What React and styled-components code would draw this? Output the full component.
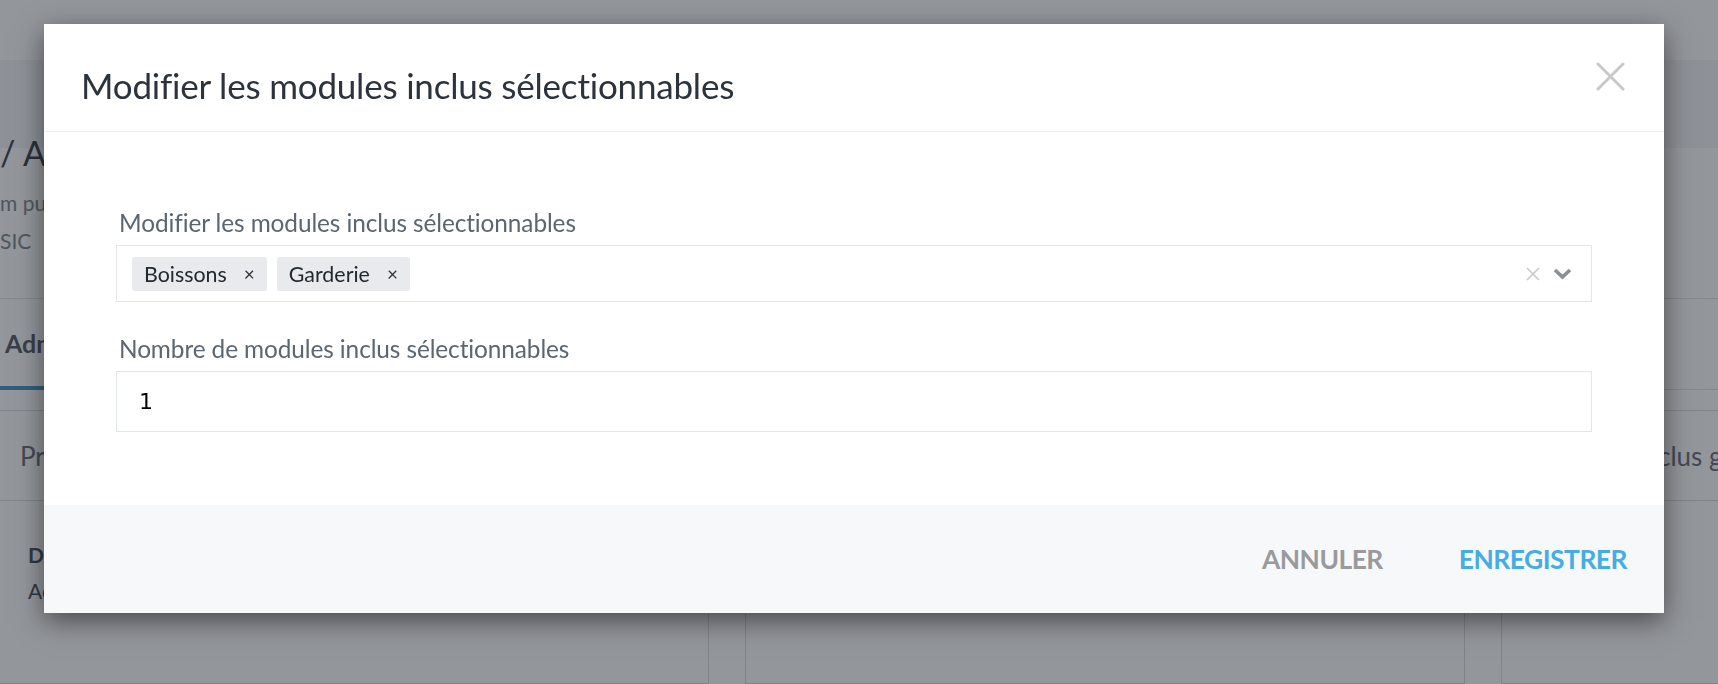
import React from "react";
import styled, { createGlobalStyle } from "styled-components";

const Global = createGlobalStyle`
  html, body { margin: 0; padding: 0; }
  body {
    width: 1718px;
    height: 684px;
    overflow: hidden;
    background: #ffffff;
    font-family: "Lato", "Liberation Sans", sans-serif;
  }
`;

/* ---------- background page ---------- */
const Page = styled.div`
  width: 1718px;
  height: 684px;
  overflow: hidden;
  display: flex;
  flex-direction: column;
  background: #ffffff;
  color: #2f3640;
`;

const TopNav = styled.div`
  height: 60px;
  flex: none;
  background: #ffffff;
  box-shadow: 0 2px 6px rgba(0, 0, 0, 0.1);
`;

const HeaderBand = styled.div`
  height: 88px;
  flex: none;
  background: #f4f5f7;
`;

const TitleSection = styled.div`
  height: 150px;
  flex: none;
  border-bottom: 1px solid #dfe3e6;
  display: flex;
  flex-direction: column;
`;

const PageTitle = styled.div`
  font-size: 34px;
  font-weight: 400;
  line-height: 34px;
  margin-top: -12px;
  white-space: nowrap;
  color: #2f3640;
`;

const PageSub = styled.div`
  font-size: 21px;
  line-height: 38px;
  color: #75808a;
  white-space: nowrap;
  margin-top: ${(p) => p.$top || 0}px;
`;

const Tabs = styled.div`
  height: 90px;
  flex: none;
  border-bottom: 1px solid #dfe3e6;
  display: flex;
  align-items: stretch;
`;

const Tab = styled.div`
  padding: 0 20px 0 5px;
  display: flex;
  align-items: center;
  font-size: 25px;
  font-weight: 700;
  color: #4a525b;
  border-bottom: 4px solid #3b8fc0;
  margin-bottom: -1px;
`;

const Cards = styled.div`
  margin-top: 20px;
  display: grid;
  grid-template-columns: 709px 720px 260px;
  column-gap: 36px;
  flex: 1;
`;

const Card = styled.div`
  border: 1px solid #d7dbdf;
  border-left-width: ${(p) => (p.$first ? 0 : 1)}px;
  display: flex;
  flex-direction: column;
`;

const CardHead = styled.div`
  height: 89px;
  border-bottom: 1px solid #d7dbdf;
  display: flex;
  align-items: center;
  padding-left: ${(p) => p.$pad || 20}px;
  font-size: 26px;
  color: #5b6670;
  white-space: nowrap;
`;

const CardBody = styled.div`
  padding: 36px 28px 0;
  font-size: 21px;
  line-height: 36px;
  color: #3b434b;
`;

const CardLabel = styled.div`
  font-weight: 700;
`;

/* ---------- overlay & modal ---------- */
const Overlay = styled.div`
  position: fixed;
  inset: 0;
  background: rgba(40, 46, 56, 0.5);
`;

const Modal = styled.div`
  position: fixed;
  left: 44px;
  top: 24px;
  width: 1620px;
  background: #ffffff;
  box-shadow: 0 8px 26px rgba(0, 0, 0, 0.5);
  display: flex;
  flex-direction: column;
`;

const ModalHeader = styled.div`
  height: 108px;
  box-sizing: border-box;
  border-bottom: 1px solid #eceeef;
  padding: 38px 39px 0 37px;
  display: flex;
  justify-content: space-between;
  align-items: flex-start;
`;

const ModalTitle = styled.h1`
  margin: 6px 0 0;
  font-size: 35px;
  font-weight: 400;
  line-height: 1;
  color: #2c333c;
  letter-spacing: -0.2px;
`;

const CloseButton = styled.button`
  width: 29px;
  height: 29px;
  padding: 0;
  border: 0;
  background: none;
  display: block;
  cursor: pointer;
`;

const ModalBody = styled.div`
  padding: 77px 72px 73px 72px;
  display: flex;
  flex-direction: column;
`;

const Field = styled.div`
  display: flex;
  flex-direction: column;
  margin-top: ${(p) => p.$top || 0}px;
`;

const Label = styled.label`
  font-size: 24.4px;
  line-height: 28px;
  color: #5b6670;
  padding-left: 3px;
  margin-bottom: 8px;
  letter-spacing: -0.1px;
  white-space: nowrap;
`;

const SelectBox = styled.div`
  height: 57px;
  box-sizing: border-box;
  border: 1px solid #e4e7e9;
  display: flex;
  align-items: center;
  padding: 0 19px 0 15px;
`;

const TagList = styled.div`
  flex: 1;
  display: flex;
  gap: 10px;
`;

const Tag = styled.span`
  height: 34px;
  display: inline-flex;
  align-items: center;
  background: #e8eaed;
  border-radius: 3px;
  padding: 0 12px 0 12px;
  font-size: 21.4px;
  color: #222831;
`;

const TagRemove = styled.span`
  margin-left: 17px;
  font-size: 19px;
  color: #30363d;
  line-height: 1;
`;

const SelectIcons = styled.div`
  display: flex;
  align-items: center;
  gap: 13px;
`;

const NumberInput = styled.input`
  height: 61px;
  box-sizing: border-box;
  border: 1px solid #e1e6e9;
  padding: 0 22px;
  font-family: "DejaVu Sans", sans-serif;
  font-size: 22px;
  color: #000;
  outline: none;
  background: #fff;
`;

const ModalFooter = styled.div`
  height: 108px;
  background: #f7f8fa;
  display: flex;
  align-items: center;
  justify-content: flex-end;
  padding-right: 21px;
  gap: 44px;
`;

const FooterButton = styled.button`
  border: 0;
  background: none;
  padding: 8px 16px;
  font-family: "Lato", "Liberation Sans", sans-serif;
  font-size: 26.4px;
  font-weight: 700;
  letter-spacing: -0.5px;
  color: ${(p) => (p.$primary ? "#45ade2" : "#9a9a9c")};
  cursor: pointer;
`;

const CloseIcon = () => (
  <svg width="29" height="29" viewBox="0 0 29 29">
    <path d="M2 2 L27 27 M27 2 L2 27" stroke="#c9c9c9" strokeWidth="3" strokeLinecap="round" />
  </svg>
);

const ClearIcon = () => (
  <svg width="14" height="14" viewBox="0 0 14 14">
    <path d="M1 1 L13 13 M13 1 L1 13" stroke="#c9c9c9" strokeWidth="1.6" />
  </svg>
);

const ChevronIcon = () => (
  <svg width="19" height="12" viewBox="0 0 19 12">
    <path d="M2 2 L9.5 9 L17 2" stroke="#8a8f96" strokeWidth="3.6" fill="none" strokeLinejoin="miter" />
  </svg>
);

export default function App() {
  return (
    <>
      <Global />
      <Page>
        <TopNav />
        <HeaderBand />
        <TitleSection>
          <PageTitle>/ Acme Formule</PageTitle>
          <PageSub $top={14}>m public</PageSub>
          <PageSub>SIC</PageSub>
        </TitleSection>
        <Tabs>
          <Tab>Administration</Tab>
        </Tabs>
        <Cards>
          <Card $first>
            <CardHead>Prix</CardHead>
            <CardBody>
              <CardLabel>Description</CardLabel>
              <div>Accès standard</div>
            </CardBody>
          </Card>
          <Card>
            <CardHead>Modules</CardHead>
            <CardBody />
          </Card>
          <Card>
            <CardHead $pad={30}>Modules inclus gratuits</CardHead>
            <CardBody />
          </Card>
        </Cards>
      </Page>
      <Overlay />
      <Modal>
        <ModalHeader>
          <ModalTitle>Modifier les modules inclus sélectionnables</ModalTitle>
          <CloseButton aria-label="Fermer">
            <CloseIcon />
          </CloseButton>
        </ModalHeader>
        <ModalBody>
          <Field>
            <Label>Modifier les modules inclus sélectionnables</Label>
            <SelectBox>
              <TagList>
                <Tag>
                  Boissons<TagRemove>×</TagRemove>
                </Tag>
                <Tag>
                  Garderie<TagRemove>×</TagRemove>
                </Tag>
              </TagList>
              <SelectIcons>
                <ClearIcon />
                <ChevronIcon />
              </SelectIcons>
            </SelectBox>
          </Field>
          <Field $top={33}>
            <Label>Nombre de modules inclus sélectionnables</Label>
            <NumberInput type="text" defaultValue="1" />
          </Field>
        </ModalBody>
        <ModalFooter>
          <FooterButton>ANNULER</FooterButton>
          <FooterButton $primary>ENREGISTRER</FooterButton>
        </ModalFooter>
      </Modal>
    </>
  );
}
